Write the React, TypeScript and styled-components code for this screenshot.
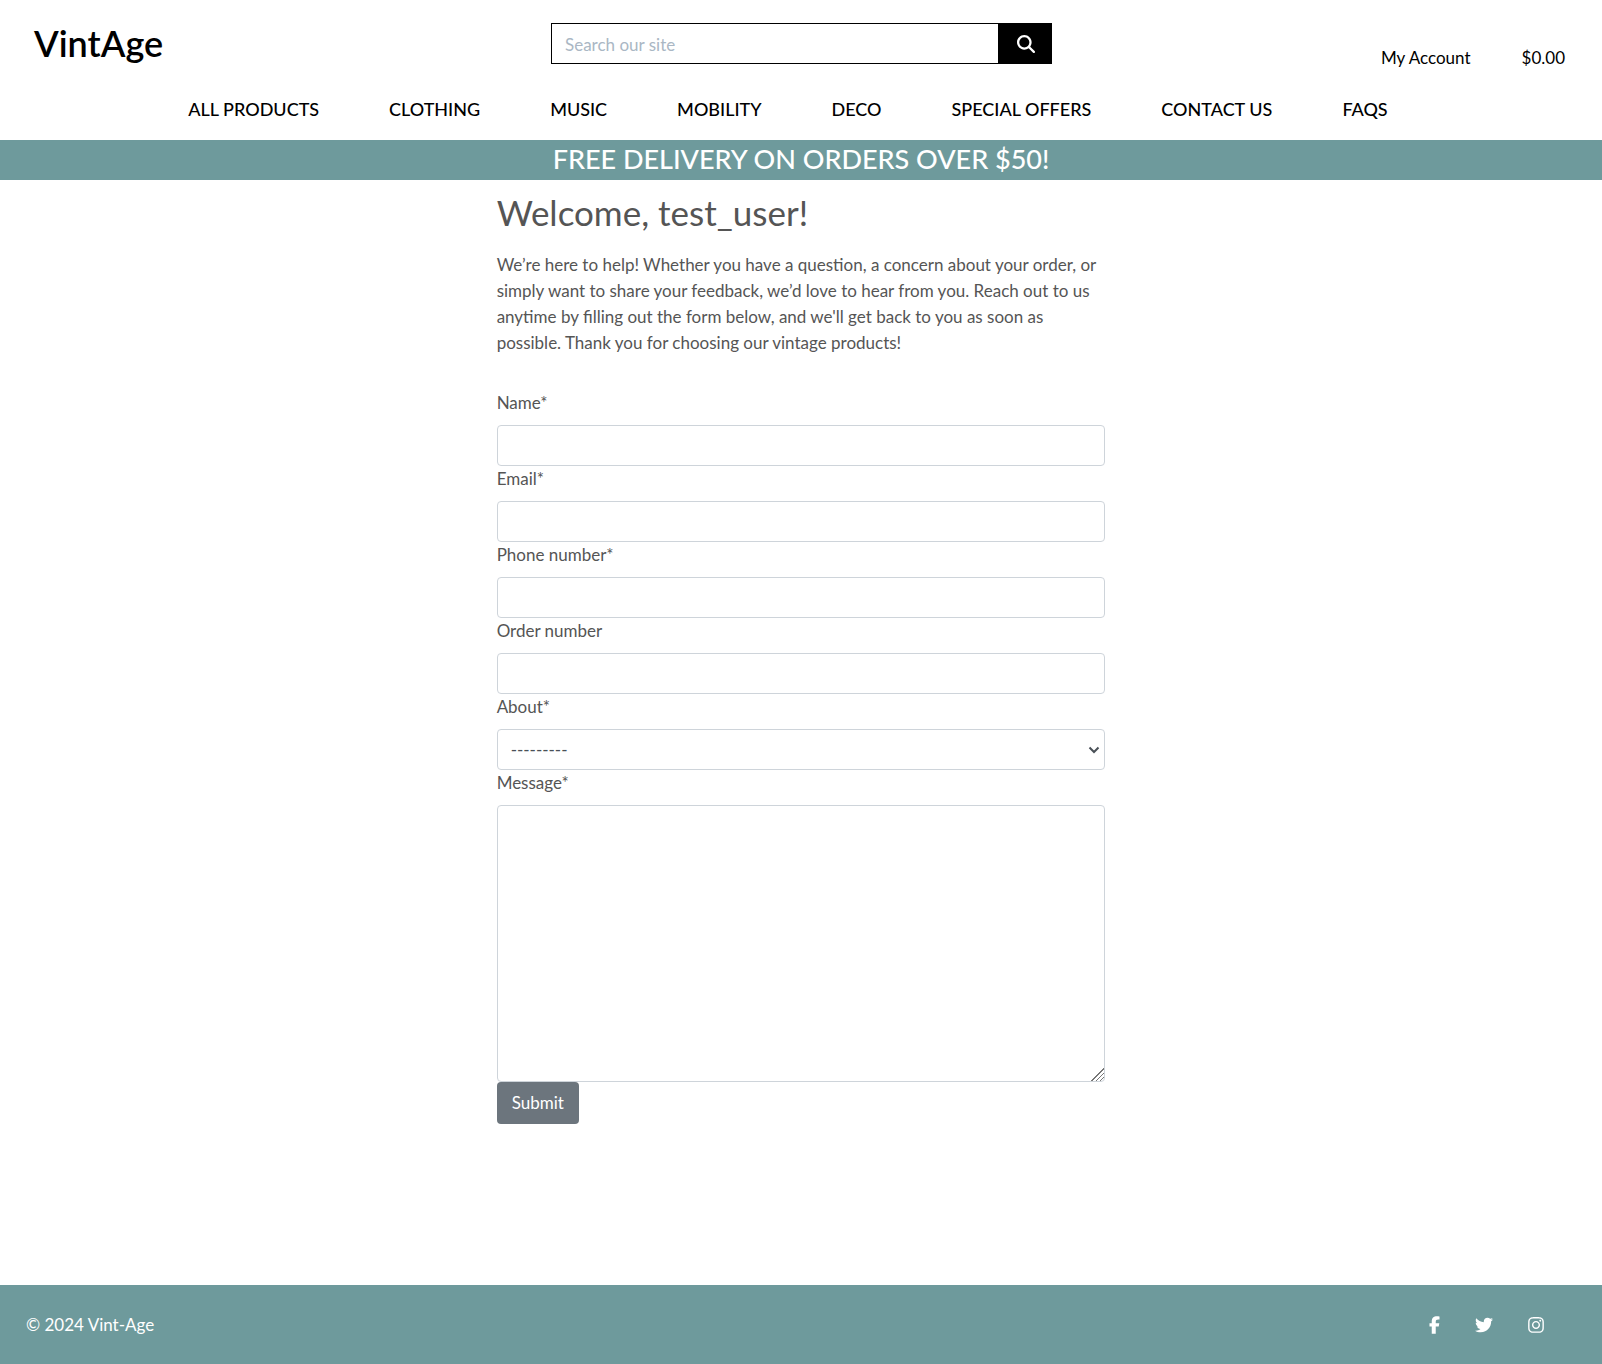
import React from "react";
import styled, { createGlobalStyle } from "styled-components";
import { FaFacebookF, FaTwitter, FaInstagram, FaMagnifyingGlass } from "react-icons/fa6";

const GlobalStyle = createGlobalStyle`
  *, *::before, *::after { box-sizing: border-box; }
  body {
    margin: 0;
    background: #fff;
    color: #555;
    font-family: Lato, "Open Sans", sans-serif;
    font-size: 17px;
    line-height: 26px;
  }
  a { color: inherit; text-decoration: none; }
  button, input, select, textarea { font: inherit; }
`;

const Page = styled.div`
  display: flex;
  flex-direction: column;
  min-height: 100vh;
`;

const Header = styled.header`
  display: flex;
  flex-direction: column;
  color: #000;
`;

const TopBar = styled.div`
  display: grid;
  grid-template-columns: repeat(3, 1fr);
  align-items: start;
  height: 88px;
`;

const Logo = styled.a`
  padding: 21px 34px 0;
  font-size: 36px;
  line-height: 44px;
  font-weight: 600;
`;

const SearchForm = styled.form`
  display: flex;
  margin: 23px 16px 0 17px;
  height: 41px;
`;

const SearchInput = styled.input`
  flex: 1;
  min-width: 0;
  padding: 8px 13px 6px;
  border: 1px solid #000;
  border-radius: 0;
  background: #fff;
  color: #000;
  outline: none;
  &::placeholder { color: #aab7c4; opacity: 1; }
`;

const SearchButton = styled.button`
  display: flex;
  align-items: center;
  justify-content: center;
  width: 53px;
  padding: 1px 0 0;
  border: 0;
  background: #000;
  color: #fff;
`;

const UserLinks = styled.div`
  display: flex;
  justify-content: flex-end;
  gap: 51px;
  padding: 45px 37px 0 0;
`;

const Nav = styled.nav`
  display: flex;
  justify-content: center;
  gap: 70px;
  padding: 8px 26px 18px 0;
  font-size: 18px;
  font-weight: 500;
`;

const Banner = styled.h4`
  margin: 0;
  padding: 2px 0 4px;
  background: #6e9a9c;
  color: #fff;
  font-size: 27px;
  line-height: 34px;
  font-weight: 500;
  text-align: center;
`;

const Main = styled.main`
  flex: 1;
  width: 38%;
  min-width: 320px;
  margin: 0 auto;
`;

const Title = styled.h2`
  margin: 11px 0 19px;
  font-size: 35px;
  line-height: 42px;
  font-weight: 400;
`;

const Intro = styled.p`
  margin: 0 0 34px;
`;

const ContactForm = styled.form`
  display: flex;
  flex-direction: column;
  align-items: stretch;
`;

const Label = styled.label`
  margin-bottom: 9px;
`;

const Control = styled.input`
  width: 100%;
  height: 41px;
  padding: 6px 13px;
  border: 1px solid #ced4da;
  border-radius: 4px;
  background: #fff;
  color: #495057;
`;

const Message = styled(Control)`
  height: 277px;
  resize: vertical;
  &::-webkit-resizer {
    background: linear-gradient(
      135deg,
      transparent 12px,
      #777 12px 13px,
      transparent 13px 15px,
      #777 15px 16px,
      transparent 16px 18px,
      #777 18px 19px,
      transparent 19px
    );
  }
`;

const SelectWrap = styled.div`
  position: relative;
`;

const Select = styled(Control)`
  display: block;
  appearance: none;
`;

const Chevron = styled.svg`
  position: absolute;
  right: 5px;
  top: 17px;
  width: 12px;
  height: 8px;
  pointer-events: none;
`;

const Submit = styled.button`
  align-self: flex-start;
  height: 42px;
  padding: 7px 15px;
  border: 0;
  border-radius: 4px;
  background: #6c757d;
  color: #fff;
`;

const Footer = styled.footer`
  display: flex;
  align-items: center;
  justify-content: space-between;
  padding: 27px 58px 26px 26px;
  background: #6e9a9c;
  color: #fff;
`;

const Socials = styled.div`
  display: flex;
  align-items: center;
  gap: 35px;
`;

const SocialLink = styled.a<{ $width: number }>`
  display: flex;
  svg { width: ${({ $width }) => $width}px; height: 18px; }
`;

const categories = [
  "ALL PRODUCTS",
  "CLOTHING",
  "MUSIC",
  "MOBILITY",
  "DECO",
  "SPECIAL OFFERS",
  "CONTACT US",
  "FAQS",
];

const fields = [
  { id: "name", label: "Name*", type: "text" },
  { id: "email", label: "Email*", type: "email" },
  { id: "phone", label: "Phone number*", type: "tel" },
  { id: "order", label: "Order number", type: "text" },
];

export default function App() {
  return (
    <Page>
      <GlobalStyle />
      <Header>
        <TopBar>
          <Logo href="#">VintAge</Logo>
          <SearchForm>
            <SearchInput type="text" placeholder="Search our site" aria-label="Search our site" />
            <SearchButton type="submit" aria-label="Search">
              <FaMagnifyingGlass size={18} />
            </SearchButton>
          </SearchForm>
          <UserLinks>
            <a href="#">My Account</a>
            <a href="#">$0.00</a>
          </UserLinks>
        </TopBar>
        <Nav>
          {categories.map((name) => (
            <a key={name} href="#">{name}</a>
          ))}
        </Nav>
      </Header>
      <Banner>FREE DELIVERY ON ORDERS OVER $50!</Banner>
      <Main>
        <Title>Welcome, test_user!</Title>
        <Intro>
          We’re here to help! Whether you have a question, a concern about your order, or simply
          want to share your feedback, we’d love to hear from you. Reach out to us anytime by
          filling out the form below, and we'll get back to you as soon as possible. Thank you for
          choosing our vintage products!
        </Intro>
        <ContactForm>
          {fields.map(({ id, label, type }) => (
            <React.Fragment key={id}>
              <Label htmlFor={id}>{label}</Label>
              <Control id={id} type={type} />
            </React.Fragment>
          ))}
          <Label htmlFor="about">About*</Label>
          <SelectWrap>
            <Select as="select" id="about">
              <option>---------</option>
            </Select>
            <Chevron viewBox="0 0 12 8" fill="none" stroke="#495057" strokeWidth="2" aria-hidden="true">
              <path d="M1.5 1.5 6 6l4.5-4.5" />
            </Chevron>
          </SelectWrap>
          <Label htmlFor="message">Message*</Label>
          <Message as="textarea" id="message" />
          <Submit type="submit">Submit</Submit>
        </ContactForm>
      </Main>
      <Footer>
        <span>© 2024 Vint-Age</span>
        <Socials>
          <SocialLink href="#" aria-label="Facebook" $width={11}><FaFacebookF /></SocialLink>
          <SocialLink href="#" aria-label="Twitter" $width={18}><FaTwitter /></SocialLink>
          <SocialLink href="#" aria-label="Instagram" $width={16}><FaInstagram /></SocialLink>
        </Socials>
      </Footer>
    </Page>
  );
}
